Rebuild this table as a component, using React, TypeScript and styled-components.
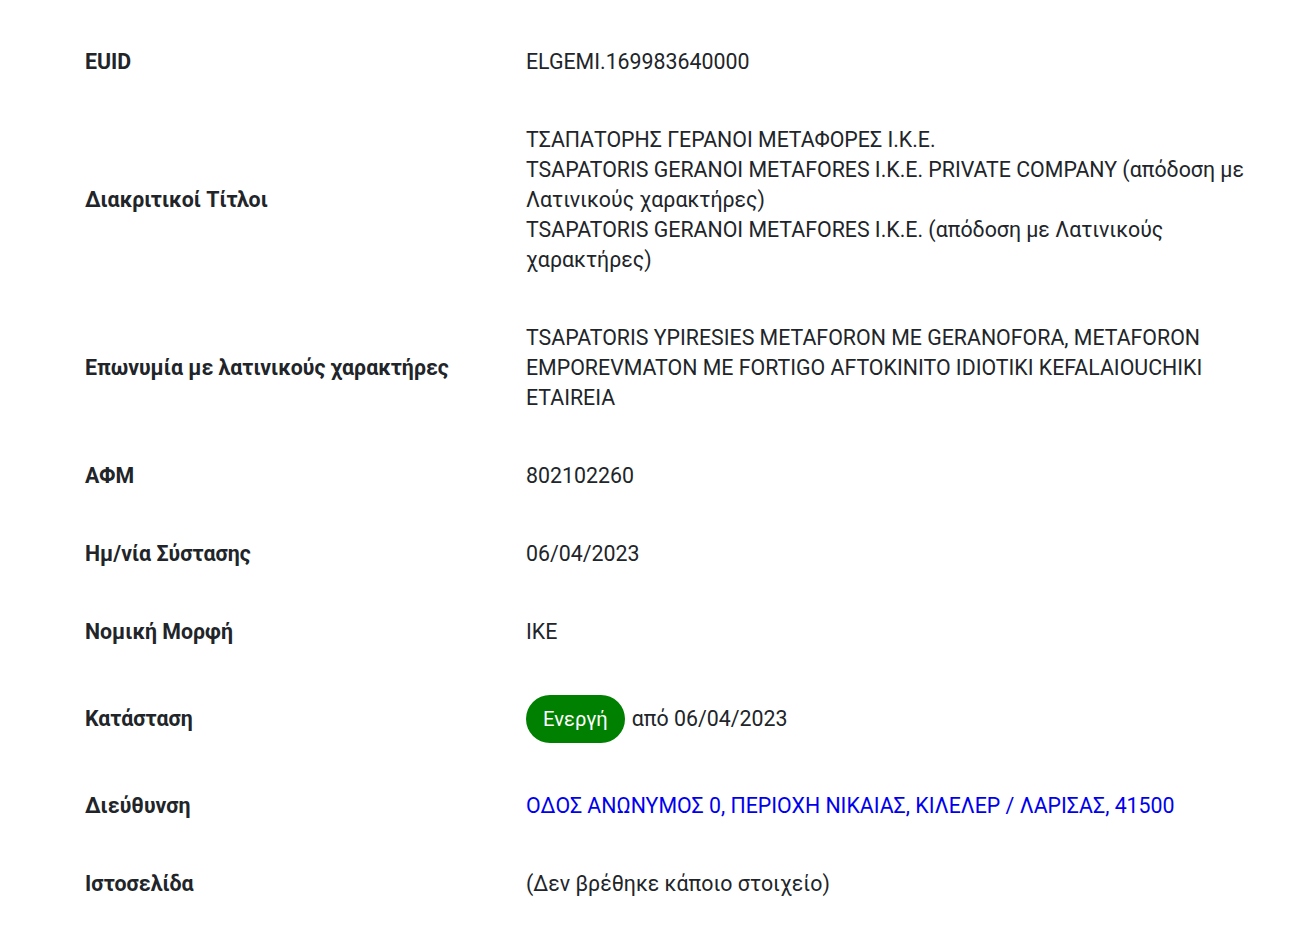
import styled, { createGlobalStyle } from "styled-components";

const GlobalStyle = createGlobalStyle`
    body {
        margin: 0;
        background: #ffffff;
        font-family: Roboto, "Noto Sans", sans-serif;
        color: #212529;
    }
`;

const Container = styled.main`
    padding: 23px 40px 0 85px;
`;

const Table = styled.div`
    display: grid;
    grid-template-columns: 441px 742px;
`;

const Label = styled.div`
    display: flex;
    align-items: center;
    padding: 24px 0;
    font-size: 21.33px;
    font-weight: 700;
    line-height: 30px;
`;

const Value = styled.div<{ $link?: boolean }>`
    display: flex;
    flex-wrap: wrap;
    align-items: center;
    padding: 24px 0;
    font-size: 21.33px;
    line-height: 30px;
    color: ${(p) => (p.$link ? "#0000ee" : "#212529")};
`;

const Lines = styled.div`
    display: flex;
    flex-direction: column;
`;

const Badge = styled.span`
    display: inline-flex;
    align-items: center;
    height: 48px;
    padding: 0 17px;
    margin-right: 7px;
    border-radius: 24px;
    background: #008000;
    color: #ffffff;
    font-size: 20.2px;
`;

const Link = styled.a`
    color: inherit;
    text-decoration: none;
`;

const rows: { label: string; value: React.ReactNode; link?: boolean }[] = [
    { label: "EUID", value: "ELGEMI.169983640000" },
    {
        label: "Διακριτικοί Τίτλοι",
        value: (
            <Lines>
                <div>ΤΣΑΠΑΤΟΡΗΣ ΓΕΡΑΝΟΙ ΜΕΤΑΦΟΡΕΣ Ι.Κ.Ε.</div>
                <div>TSAPATORIS GERANOI METAFORES I.K.E. PRIVATE COMPANY (απόδοση με Λατινικούς χαρακτήρες)</div>
                <div>TSAPATORIS GERANOI METAFORES I.K.E. (απόδοση με Λατινικούς χαρακτήρες)</div>
            </Lines>
        ),
    },
    {
        label: "Επωνυμία με λατινικούς χαρακτήρες",
        value: "TSAPATORIS YPIRESIES METAFORON ME GERANOFORA, METAFORON EMPOREVMATON ME FORTIGO AFTOKINITO IDIOTIKI KEFALAIOUCHIKI ETAIREIA",
    },
    { label: "ΑΦΜ", value: "802102260" },
    { label: "Ημ/νία Σύστασης", value: "06/04/2023" },
    { label: "Νομική Μορφή", value: "ΙΚΕ" },
    {
        label: "Κατάσταση",
        value: (
            <>
                <Badge>Ενεργή</Badge>
                <span>από 06/04/2023</span>
            </>
        ),
    },
    {
        label: "Διεύθυνση",
        value: <Link href="#">ΟΔΟΣ ΑΝΩΝΥΜΟΣ 0, ΠΕΡΙΟΧΗ ΝΙΚΑΙΑΣ, ΚΙΛΕΛΕΡ / ΛΑΡΙΣΑΣ, 41500</Link>,
        link: true,
    },
    { label: "Ιστοσελίδα", value: "(Δεν βρέθηκε κάποιο στοιχείο)" },
];

export default function App() {
    return (
        <Container>
            <GlobalStyle />
            <Table>
                {rows.map((r) => (
                    <>
                        <Label key={r.label + "-l"}>{r.label}</Label>
                        <Value key={r.label + "-v"} $link={r.link}>
                            {r.value}
                        </Value>
                    </>
                ))}
            </Table>
        </Container>
    );
}
